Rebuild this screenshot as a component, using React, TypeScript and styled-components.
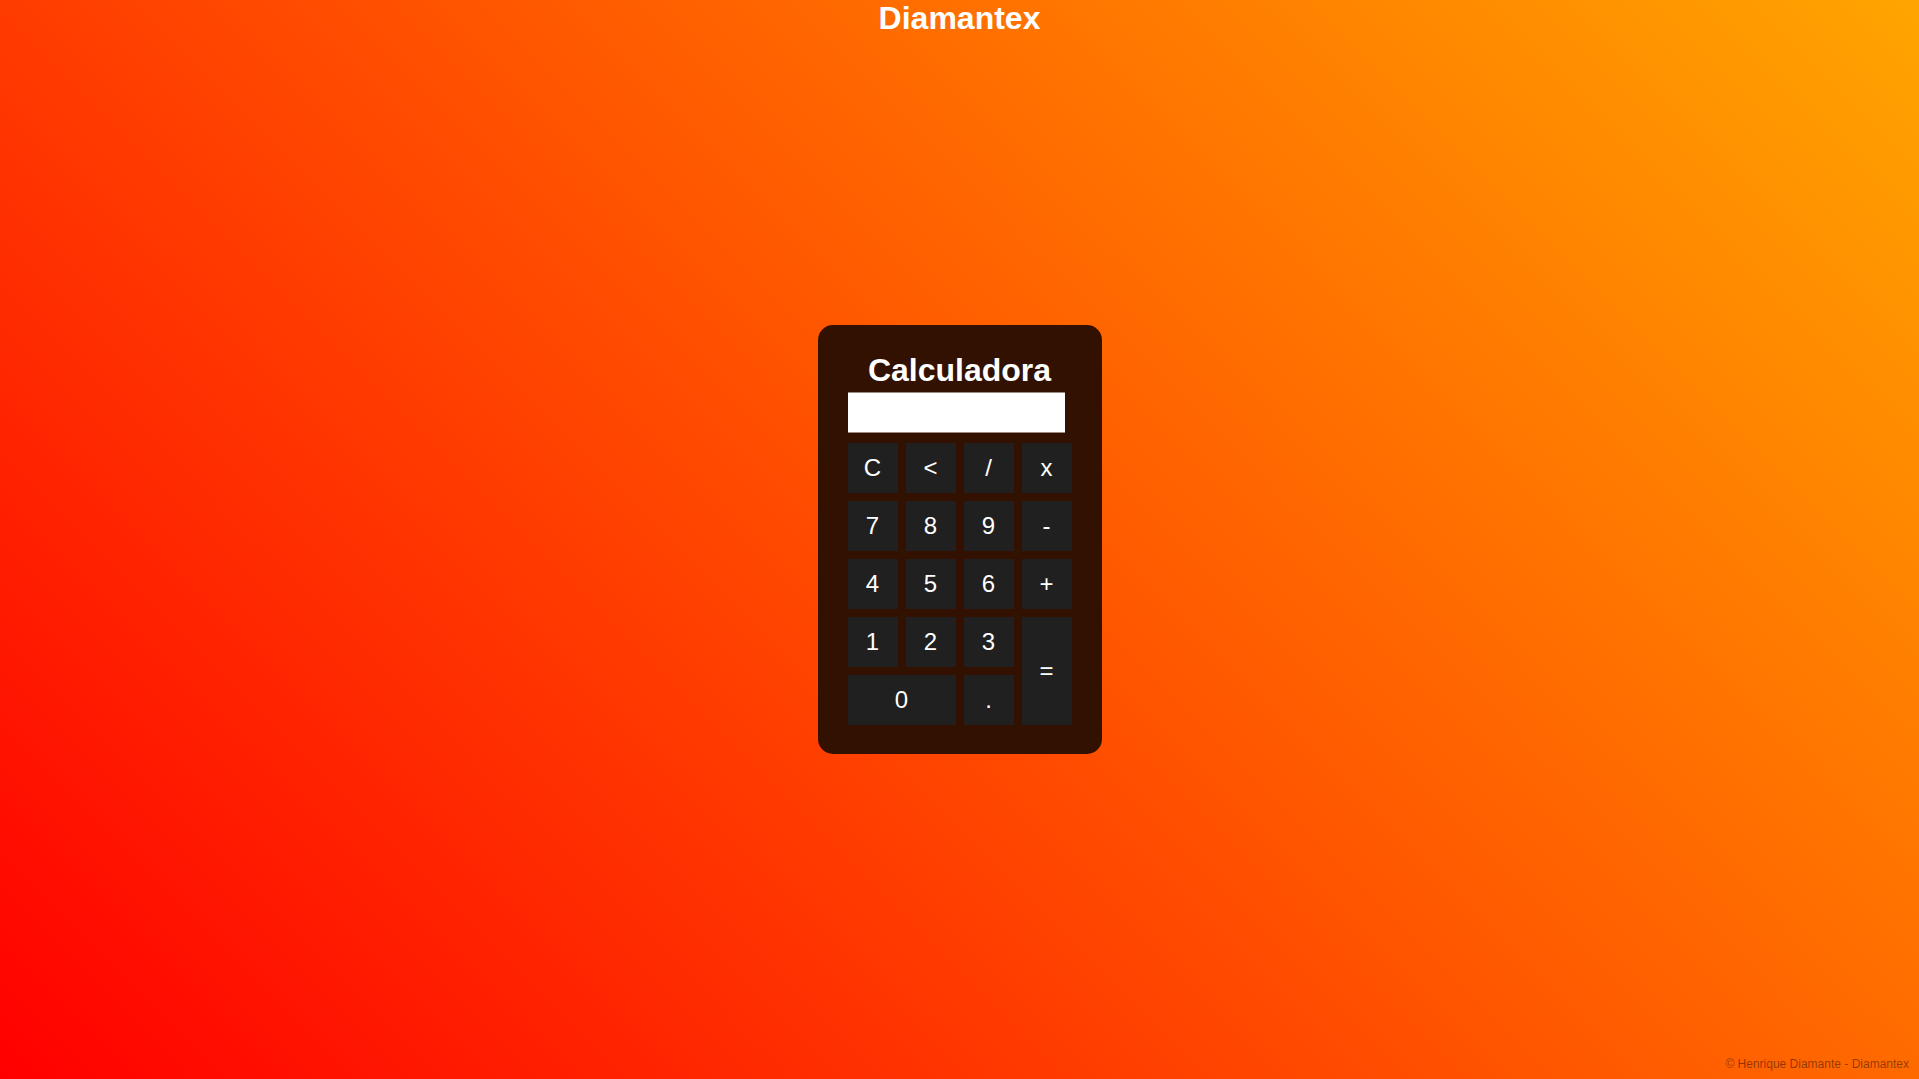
import React from "react";
import styled, { createGlobalStyle } from "styled-components";

const GlobalStyle = createGlobalStyle`
  html, body {
    margin: 0;
    padding: 0;
    height: 100%;
  }
  body {
    font-family: "Liberation Sans", Arial, sans-serif;
    background: linear-gradient(45deg, #ff0000, #ffa500);
    min-height: 100vh;
  }
`;

const Page = styled.div`
  height: 100vh;
  display: grid;
  grid-template-rows: 1fr auto 1fr;
  justify-items: center;
  overflow: hidden;
`;

const Header = styled.h1`
  align-self: start;
  margin: 0;
  font-size: 32px;
  line-height: 37px;
  font-weight: 700;
  color: #ffffff;
  text-align: center;
`;

const Footer = styled.footer`
  align-self: end;
  justify-self: end;
  padding: 0 10px 8px 0;
  font-size: 12px;
  line-height: 14px;
  color: rgba(0, 0, 0, 0.45);
`;

const Panel = styled.div`
  width: 224px;
  padding: 27px 30px 29px;
  background: #331100;
  border-radius: 15px;
  display: flex;
  flex-direction: column;
`;

const Title = styled.h2`
  margin: 0 0 3px;
  font-size: 32px;
  line-height: 37px;
  font-weight: 700;
  color: #ffffff;
  text-align: center;
`;

const Display = styled.input`
  width: 217px;
  height: 41px;
  box-sizing: border-box;
  border: none;
  border-top: 1px solid #9a8a80;
  border-bottom: 1px solid #9a8a80;
  background: #ffffff;
  margin: 0 0 10px;
  padding: 0 6px;
  font-family: "Liberation Sans", Arial, sans-serif;
  font-size: 22px;
  text-align: right;
  outline: none;
`;

const Keys = styled.div`
  display: grid;
  grid-template-columns: repeat(4, 50px);
  grid-auto-rows: 50px;
  gap: 8px;
`;

const Key = styled.button<{ $wide?: boolean; $tall?: boolean }>`
  grid-column: ${(p) => (p.$wide ? "span 2" : "auto")};
  grid-row: ${(p) => (p.$tall ? "span 2" : "auto")};
  border: none;
  padding: 0;
  background: #202020;
  color: #ffffff;
  font-family: "Liberation Sans", Arial, sans-serif;
  font-size: 24px;
  cursor: pointer;
  display: flex;
  align-items: center;
  justify-content: center;
`;

export default function App() {
  const [value, setValue] = React.useState("");
  const press = (k: string) => {
    if (k === "C") return setValue("");
    if (k === "<") return setValue((v) => v.slice(0, -1));
    if (k === "=") {
      try {
        const expr = value.replace(/x/g, "*");
        // eslint-disable-next-line no-new-func
        const r = Function(`"use strict"; return (${expr})`)();
        setValue(String(r));
      } catch {
        setValue("Erro");
      }
      return;
    }
    setValue((v) => v + k);
  };

  const keys: { k: string; wide?: boolean; tall?: boolean }[] = [
    { k: "C" }, { k: "<" }, { k: "/" }, { k: "x" },
    { k: "7" }, { k: "8" }, { k: "9" }, { k: "-" },
    { k: "4" }, { k: "5" }, { k: "6" }, { k: "+" },
    { k: "1" }, { k: "2" }, { k: "3" }, { k: "=", tall: true },
    { k: "0", wide: true }, { k: "." },
  ];

  return (
    <>
      <GlobalStyle />
      <Page>
        <Header>Diamantex</Header>
        <Panel>
          <Title>Calculadora</Title>
          <Display readOnly value={value} />
          <Keys>
            {keys.map((key) => (
              <Key key={key.k} $wide={key.wide} $tall={key.tall} onClick={() => press(key.k)}>
                {key.k}
              </Key>
            ))}
          </Keys>
        </Panel>
        <Footer>© Henrique Diamante - Diamantex</Footer>
      </Page>
    </>
  );
}
